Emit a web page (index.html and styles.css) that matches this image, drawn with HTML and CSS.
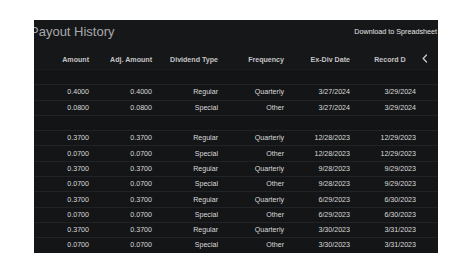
FILE: index.html
```html
<!DOCTYPE html>
<html>
<head>
<meta charset="utf-8">
<link rel="stylesheet" href="styles.css">
</head>
<body>
<div class="panel">
  <div class="topbar">
    <div class="title">Payout History</div>
    <div class="download">Download to Spreadsheet</div>
  </div>
  <div class="table">
    <div class="row head">
      <div>Amount</div><div>Adj. Amount</div><div>Dividend Type</div><div>Frequency</div><div>Ex-Div Date</div><div>Record Date</div>
    </div>
    <div class="row group"></div>
    <div class="row"><div>0.4000</div><div>0.4000</div><div>Regular</div><div>Quarterly</div><div>3/27/2024</div><div>3/29/2024</div></div>
    <div class="row"><div>0.0800</div><div>0.0800</div><div>Special</div><div>Other</div><div>3/27/2024</div><div>3/29/2024</div></div>
    <div class="row group"></div>
    <div class="row"><div>0.3700</div><div>0.3700</div><div>Regular</div><div>Quarterly</div><div>12/28/2023</div><div>12/29/2023</div></div>
    <div class="row"><div>0.0700</div><div>0.0700</div><div>Special</div><div>Other</div><div>12/28/2023</div><div>12/29/2023</div></div>
    <div class="row"><div>0.3700</div><div>0.3700</div><div>Regular</div><div>Quarterly</div><div>9/28/2023</div><div>9/29/2023</div></div>
    <div class="row"><div>0.0700</div><div>0.0700</div><div>Special</div><div>Other</div><div>9/28/2023</div><div>9/29/2023</div></div>
    <div class="row"><div>0.3700</div><div>0.3700</div><div>Regular</div><div>Quarterly</div><div>6/29/2023</div><div>6/30/2023</div></div>
    <div class="row"><div>0.0700</div><div>0.0700</div><div>Special</div><div>Other</div><div>6/29/2023</div><div>6/30/2023</div></div>
    <div class="row"><div>0.3700</div><div>0.3700</div><div>Regular</div><div>Quarterly</div><div>3/30/2023</div><div>3/31/2023</div></div>
    <div class="row"><div>0.0700</div><div>0.0700</div><div>Special</div><div>Other</div><div>3/30/2023</div><div>3/31/2023</div></div>
  </div>
  <div class="scroll-btn">
    <svg width="6" height="9" viewBox="0 0 6 9"><polyline points="4.5,1 1.2,4.5 4.5,8" fill="none" stroke="#c9c9c9" stroke-width="1.3" stroke-linecap="round" stroke-linejoin="round"/></svg>
  </div>
</div>
</body>
</html>
```

FILE: styles.css
```css
html, body {
  margin: 0;
  padding: 0;
  background: #ffffff;
}
body {
  font-family: "Liberation Sans", Arial, sans-serif;
}
.panel {
  position: relative;
  margin: 20px 0 0 34px;
  width: 404px;
  height: 233px;
  background: #161719;
  overflow: hidden;
}
.topbar {
  height: 24px;
  display: flex;
  align-items: center;
  justify-content: space-between;
}
.title {
  margin-left: -4px;
  font-size: 13px;
  color: #a8a8aa;
  line-height: 14px;
}
.download {
  font-size: 7.2px;
  color: #e4e4e4;
  margin-right: 1px;
  line-height: 8px;
}
.table {
  display: flex;
  flex-direction: column;
}
.row {
  display: grid;
  grid-template-columns: 55px 63px 66px 66px 66px 66px;
  height: 15.3px;
  box-sizing: border-box;
  border-bottom: 1px solid #222326;
  align-items: center;
  font-size: 7.1px;
  line-height: 8px;
  color: #dadada;
  background: #141517;
}
.row > div {
  text-align: right;
  white-space: nowrap;
}
.row.head {
  height: 26px;
  align-items: end;
  padding-bottom: 5px;
  font-weight: bold;
  color: #c4c4c6;
  background: #161719;
  border-bottom: 1px solid #1c1d20;
}
.row.group {
  background: #131416;
}
.scroll-btn {
  position: absolute;
  left: 372px;
  top: 24px;
  width: 32px;
  height: 25px;
  background: #161719;
  display: flex;
  align-items: end;
  justify-content: flex-start;
  box-sizing: border-box;
  padding-left: 16px;
}
.scroll-btn svg {
  margin-bottom: 6px;
}
```
